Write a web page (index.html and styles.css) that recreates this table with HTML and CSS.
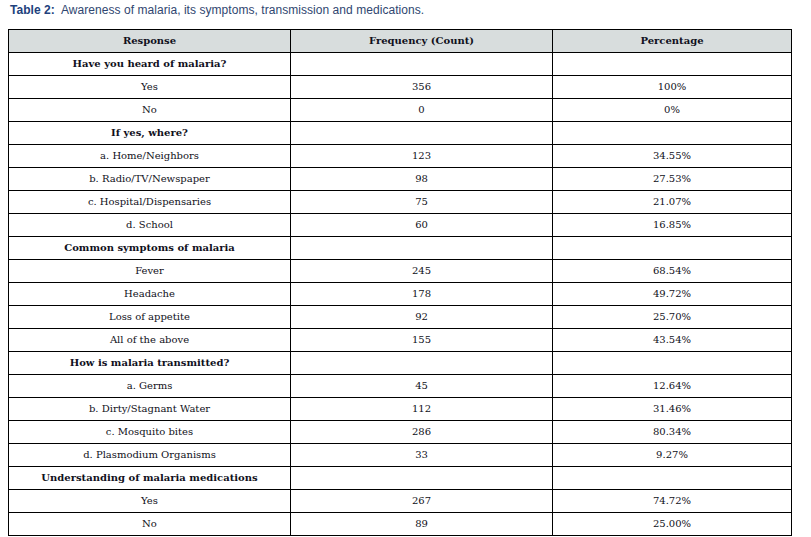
FILE: index.html
```html
<!DOCTYPE html>
<html>
<head>
<meta charset="utf-8">
<link rel="stylesheet" href="styles.css">
</head>
<body>
<p class="caption"><b>Table 2:</b>&nbsp; Awareness of malaria, its symptoms, transmission and medications.</p>
<table class="data">
<colgroup><col class="c1"><col class="c2"><col class="c3"></colgroup>
<thead><tr><th>Response</th><th>Frequency (Count)</th><th>Percentage</th></tr></thead>
<tbody>
<tr class="sec"><td>Have you heard of malaria?</td><td></td><td></td></tr>
<tr><td>Yes</td><td>356</td><td>100%</td></tr>
<tr><td>No</td><td>0</td><td>0%</td></tr>
<tr class="sec"><td>If yes, where?</td><td></td><td></td></tr>
<tr><td>a. Home/Neighbors</td><td>123</td><td>34.55%</td></tr>
<tr><td>b. Radio/TV/Newspaper</td><td>98</td><td>27.53%</td></tr>
<tr><td>c. Hospital/Dispensaries</td><td>75</td><td>21.07%</td></tr>
<tr><td>d. School</td><td>60</td><td>16.85%</td></tr>
<tr class="sec"><td>Common symptoms of malaria</td><td></td><td></td></tr>
<tr><td>Fever</td><td>245</td><td>68.54%</td></tr>
<tr><td>Headache</td><td>178</td><td>49.72%</td></tr>
<tr><td>Loss of appetite</td><td>92</td><td>25.70%</td></tr>
<tr><td>All of the above</td><td>155</td><td>43.54%</td></tr>
<tr class="sec"><td>How is malaria transmitted?</td><td></td><td></td></tr>
<tr><td>a. Germs</td><td>45</td><td>12.64%</td></tr>
<tr><td>b. Dirty/Stagnant Water</td><td>112</td><td>31.46%</td></tr>
<tr><td>c. Mosquito bites</td><td>286</td><td>80.34%</td></tr>
<tr><td>d. Plasmodium Organisms</td><td>33</td><td>9.27%</td></tr>
<tr class="sec"><td>Understanding of malaria medications</td><td></td><td></td></tr>
<tr><td>Yes</td><td>267</td><td>74.72%</td></tr>
<tr><td>No</td><td>89</td><td>25.00%</td></tr>
</tbody>
</table>
</body>
</html>
```
FILE: styles.css
```css
html, body {
  margin: 0;
  padding: 0;
  background: #ffffff;
}
body {
  padding: 0 0 0 8px;
}
.caption {
  margin: 0;
  padding: 3px 0 0 2px;
  height: 29px;
  box-sizing: border-box;
  font-family: "Liberation Sans", Arial, sans-serif;
  font-size: 12px;
  line-height: 14px;
  letter-spacing: 0.05px;
  color: #2f4670;
}
.caption b {
  color: #21417c;
}
.data {
  border-collapse: collapse;
  width: 783px;
  table-layout: fixed;
  font-family: "DejaVu Serif", serif;
  font-size: 10px;
  color: #101020;
}
.c1 { width: 282px; }
.c2 { width: 262px; }
.c3 { width: 239px; }
.data th, .data td {
  border: 1px solid #000000;
  height: 22px;
  padding: 0 4px;
  text-align: center;
  vertical-align: middle;
  line-height: 12px;
}
.data th {
  background: #d8dddd;
  font-weight: bold;
}
.data tr.sec td:first-child {
  font-weight: bold;
}
```
